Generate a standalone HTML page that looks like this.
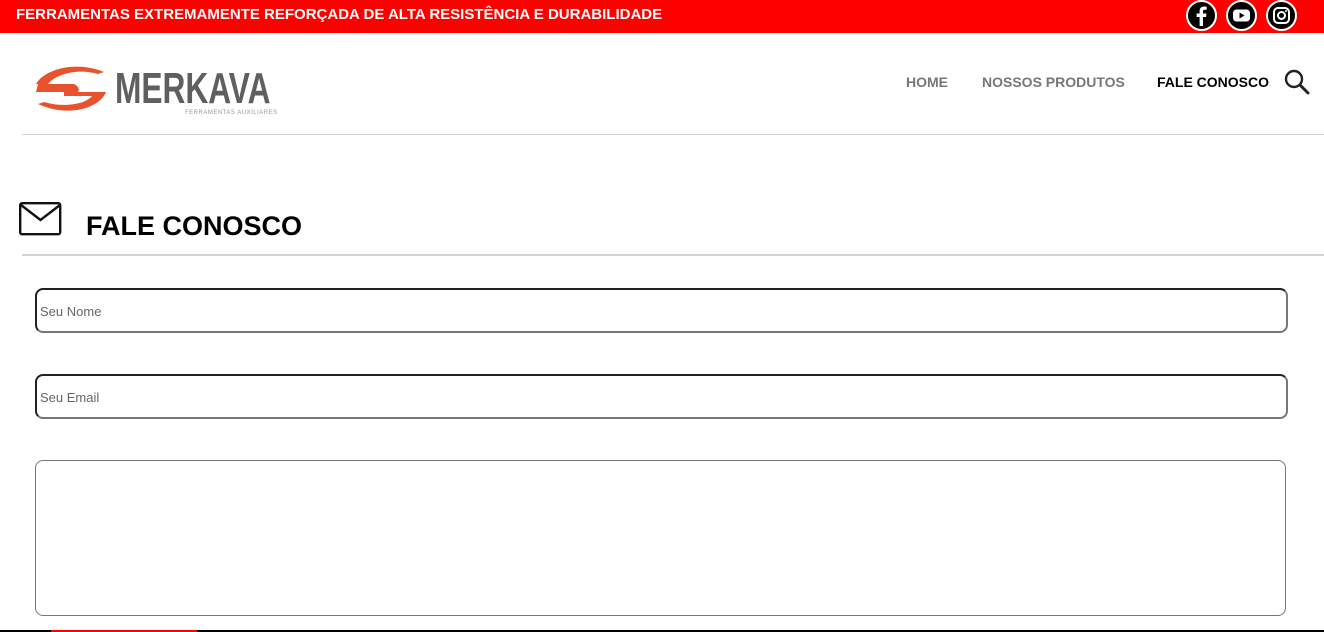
<!DOCTYPE html>
<html><head><meta charset="utf-8"><style>
*{margin:0;padding:0;box-sizing:border-box}
body{width:1324px;height:632px;overflow:hidden;background:#fff;font-family:"Liberation Sans",sans-serif;position:relative}
.top{position:absolute;left:0;top:0;width:1324px;height:33px;background:#f00}
.top .t{position:absolute;left:16px;top:6px;color:#fff;font-weight:bold;font-size:15px;white-space:nowrap}
.soc{position:absolute;top:0;width:31px;height:31px;border-radius:50%;background:#000;border:2px solid #fff}
.nav{position:absolute;top:74px;font-weight:bold;font-size:14px;color:#777;white-space:nowrap}
.hr{position:absolute;height:1px;background:#d4d4d4}
.inp{position:absolute;left:35px;width:1253px;height:45px;border:2px solid #222;border-bottom-color:#777;border-right-color:#777;border-radius:8px;font-size:13px;color:#666;padding:14px 3px}
</style></head><body>
<div class="top"><div class="t">FERRAMENTAS EXTREMAMENTE REFORÇADA DE ALTA RESISTÊNCIA E DURABILIDADE</div>
<div class="soc" style="left:1186px"><svg width="27" height="27" viewBox="0 0 27 27"><path d="M15 24V15h3l.5-3.5H15V9.5c0-1 .4-1.7 1.8-1.7H18.7V4.7c-.4 0-1.5-.2-2.7-.2-2.6 0-4.4 1.6-4.4 4.5v2.5H8.6V15h3v9z" fill="#fff"/></svg></div>
<div class="soc" style="left:1226px"><svg width="27" height="27" viewBox="0 0 27 27"><rect x="5" y="7.5" width="17" height="12" rx="3.5" fill="#fff"/><path d="M11.5 10.5v6l5-3z" fill="#000"/></svg></div>
<div class="soc" style="left:1266px"><svg width="27" height="27" viewBox="0 0 27 27"><rect x="6" y="6" width="15" height="15" rx="4" fill="none" stroke="#fff" stroke-width="2"/><circle cx="13.5" cy="13.5" r="3.5" fill="none" stroke="#fff" stroke-width="2"/><circle cx="18" cy="9" r="1" fill="#fff"/></svg></div>
</div>
<svg style="position:absolute;left:34px;top:62px" width="74" height="54" viewBox="0 0 74 54"><path d="M2 22C10 8 40 -2 70 10L64 12C44 6 22 12 14 22Z" fill="#e8532d"/><path d="M4 22H40C44 24 46 27 44 30H2Z" fill="#e8532d"/><path d="M30 30H72C66 46 34 56 4 42L10 40C30 46 52 42 58 34H30Z" fill="#e8532d"/></svg>
<div style="position:absolute;left:115px;top:64px;font-size:44px;font-weight:bold;color:#5f5f5f;transform:scaleX(0.72);transform-origin:left;line-height:50px">MERKAVA</div>
<div style="position:absolute;left:185px;top:110px;font-size:6px;color:#999;letter-spacing:.5px">FERRAMENTAS AUXILIARES</div>
<div class="nav" style="left:906px">HOME</div>
<div class="nav" style="left:982px">NOSSOS PRODUTOS</div>
<div class="nav" style="left:1157px;color:#000">FALE CONOSCO</div>
<svg style="position:absolute;left:1283px;top:68px" width="28" height="28" viewBox="0 0 28 28"><circle cx="11" cy="11" r="8" fill="none" stroke="#222" stroke-width="2.4"/><path d="M17 17l8 8" stroke="#222" stroke-width="3" stroke-linecap="round"/></svg>
<div class="hr" style="left:22px;top:134px;width:1302px"></div>
<svg style="position:absolute;left:19px;top:202px" width="43" height="34" viewBox="0 0 43 34"><rect x="1.2" y="1.2" width="40" height="31" rx="2" fill="none" stroke="#111" stroke-width="2.4"/><path d="M2 3l19.5 15L41 3" fill="none" stroke="#111" stroke-width="2.4"/></svg>
<div style="position:absolute;left:86px;top:211px;font-size:27px;font-weight:bold;color:#000">FALE CONOSCO</div>
<div class="hr" style="left:22px;top:254px;width:1302px;height:2px"></div>
<div class="inp" style="top:288px">Seu Nome</div>
<div class="inp" style="top:374px">Seu Email</div>
<div style="position:absolute;left:35px;top:460px;width:1251px;height:156px;border:1px solid #777;border-radius:8px"></div>
<div style="position:absolute;left:0;top:630px;width:1324px;height:2px;background:#000"></div>
<div style="position:absolute;left:51px;top:630px;width:146px;height:2px;background:#f00"></div>
</body></html>
